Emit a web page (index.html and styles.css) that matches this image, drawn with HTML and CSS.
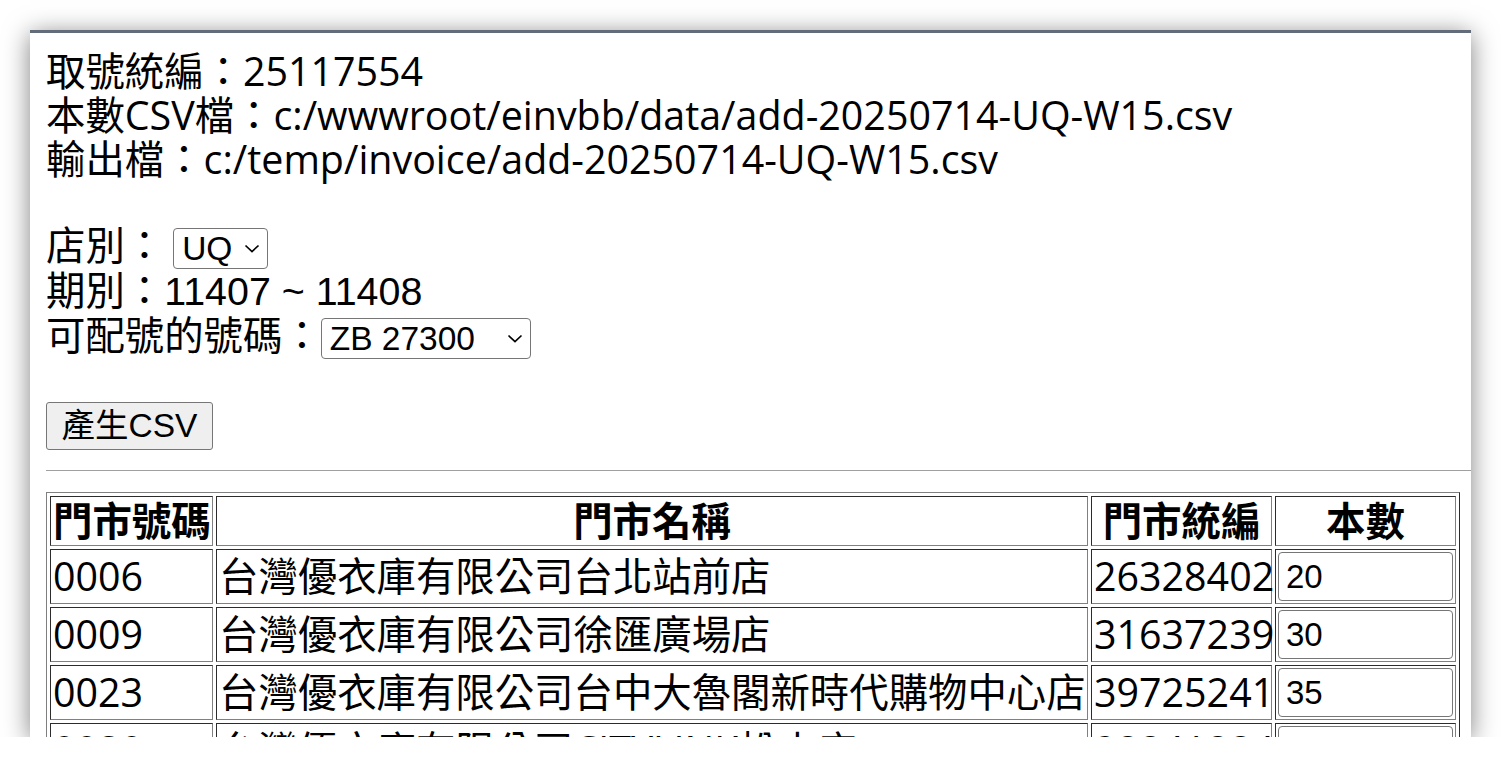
FILE: index.html
```html
<!DOCTYPE html>
<html lang="zh-Hant">
<head>
<meta charset="utf-8">
<title>取號</title>
<link rel="stylesheet" href="styles.css">
</head>
<body>
<div class="window">
  <div class="info">
    <div class="line">取號統編：25117554</div>
    <div class="line">本數CSV檔：c:/wwwroot/einvbb/data/add-20250714-UQ-W15.csv</div>
    <div class="line">輸出檔：c:/temp/invoice/add-20250714-UQ-W15.csv</div>
  </div>
  <div class="form">
    <div class="row">店別：<span class="pick pick-store"><select class="sel"><option>UQ</option></select><svg class="chev" width="16" height="9" viewBox="0 0 16 9"><path d="M1.5 1.5 L8 7.5 L14.5 1.5" fill="none" stroke="#000" stroke-width="1.7"/></svg></span></div>
    <div class="row">期別：<span class="val-sans">11407 ~ 11408</span></div>
    <div class="row">可配號的號碼：<span class="pick pick-num"><select class="sel"><option>ZB 27300</option></select><svg class="chev" width="16" height="9" viewBox="0 0 16 9"><path d="M1.5 1.5 L8 7.5 L14.5 1.5" fill="none" stroke="#000" stroke-width="1.7"/></svg></span></div>
  </div>
  <button class="btn" type="button">產生CSV</button>
  <hr class="sep">
  <table class="grid">
    <thead>
      <tr><th class="c-no">門市號碼</th><th class="c-name">門市名稱</th><th class="c-tax">門市統編</th><th class="c-qty">本數</th></tr>
    </thead>
    <tbody>
      <tr><td>0006</td><td>台灣優衣庫有限公司台北站前店</td><td>26328402</td><td class="qty-cell"><input class="qty" type="text" value="20"></td></tr>
      <tr><td>0009</td><td>台灣優衣庫有限公司徐匯廣場店</td><td>31637239</td><td class="qty-cell"><input class="qty" type="text" value="30"></td></tr>
      <tr><td>0023</td><td>台灣優衣庫有限公司台中大魯閣新時代購物中心店</td><td>39725241</td><td class="qty-cell"><input class="qty" type="text" value="35"></td></tr>
      <tr><td>0030</td><td>台灣優衣庫有限公司CITYLINK松山店</td><td>28841884</td><td class="qty-cell"><input class="qty" type="text" value="20"></td></tr>
    </tbody>
  </table>
</div>
</body>
</html>
```

FILE: styles.css
```css
html, body {
  margin: 0;
  padding: 0;
  background: #ffffff;
}

body {
  font-family: "Open Sans", "Noto Sans CJK TC", sans-serif;
  font-size: 39.4px;
  line-height: 44px;
  color: #000;
}

.window {
  margin: 30px 30px 0 30px;
  width: 1441px;
  height: 707px;
  box-sizing: border-box;
  border-top: 3px solid #636c7b;
  background: #fff;
  box-shadow: 0 4px 24px rgba(0, 0, 0, 0.5);
  padding: 16px 0 0 16px;
  overflow: hidden;
}

.info .line {
  height: 44px;
  white-space: nowrap;
}

.form {
  margin-top: 42px;
}

.row {
  height: 45px;
  white-space: nowrap;
}

.val-sans {
  font-family: "Liberation Sans", "Noto Sans CJK TC", sans-serif;
}

.pick {
  position: relative;
  display: inline-block;
  vertical-align: baseline;
}

.pick-store {
  margin-left: 9px;
}

.pick-num {
  margin-left: -1px;
}

.sel {
  -webkit-appearance: none;
  appearance: none;
  font-family: "Liberation Sans", "Noto Sans CJK TC", sans-serif;
  font-size: 33.5px;
  line-height: normal;
  height: 41px;
  box-sizing: border-box;
  border: 1px solid #767676;
  border-radius: 4px;
  background: #fff;
  color: #000;
  padding: 0 0 0 8px;
  margin: 0;
  display: block;
}

.pick-store .sel {
  width: 95px;
}

.pick-num .sel {
  width: 210px;
}

.chev {
  position: absolute;
  right: 8px;
  top: 16px;
  pointer-events: none;
}

.btn {
  display: block;
  margin-top: 44px;
  height: 48px;
  width: 167px;
  padding: 0;
  box-sizing: border-box;
  font-family: "Liberation Sans", "Noto Sans CJK TC", sans-serif;
  font-size: 33.5px;
  line-height: 38px;
  color: #000;
  background: #efefef;
  border: 1px solid #767676;
  border-radius: 3px;
}

.sep {
  border: 0;
  border-top: 1px solid #a0a0a0;
  height: 0;
  margin: 20px 0 21px 0;
}

.grid {
  table-layout: fixed;
  width: 1414px;
  border: 1px outset #808080;
  border-spacing: 3px;
  border-collapse: separate;
}

.grid th,
.grid td {
  border: 1px inset #808080;
  padding: 2px;
  white-space: nowrap;
  line-height: 44px;
}

.grid th {
  font-weight: bold;
  text-align: center;
}

.grid td {
  text-align: left;
  vertical-align: middle;
  padding: 1px 2px 3px 2px;
}

.grid td.qty-cell {
  padding: 2px;
}

.c-no { width: 157px; }
.c-name { width: 866px; }
.c-tax { width: 175px; }
.c-qty { width: 175px; }

.qty {
  display: block;
  width: 175px;
  height: 49px;
  box-sizing: border-box;
  border: 1px solid #767676;
  border-radius: 4px;
  padding: 0 7px;
  margin: 0;
  font-family: "Liberation Sans", sans-serif;
  font-size: 33px;
  color: #000;
  background: #fff;
}
```
